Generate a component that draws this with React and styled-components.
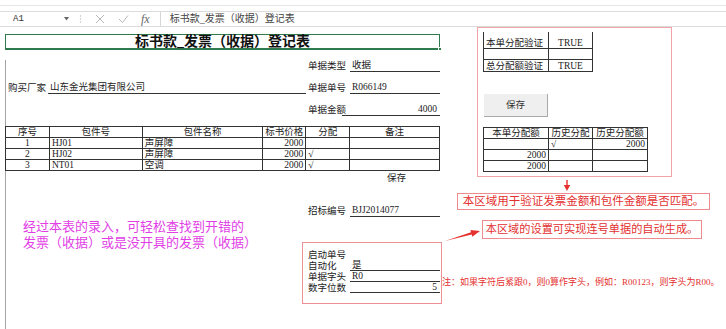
import React from "react";
import styled, { createGlobalStyle } from "styled-components";

const GlobalStyle = createGlobalStyle`
  html, body { margin: 0; padding: 0; background: #fff; }
  body {
    width: 726px;
    height: 329px;
    overflow: hidden;
    font-family: "Liberation Serif", "Noto Sans CJK SC", serif;
    color: #222;
  }
  * { box-sizing: border-box; }
`;

const Toolbar = styled.div`
  height: 6px;
  border-bottom: 1px solid #e6e6e6;
`;

const FormulaBar = styled.div`
  margin-top: 5px;
  height: 16px;
  border-top: 1px solid #dcdcdc;
  border-bottom: 1px solid #dcdcdc;
  display: flex;
  align-items: center;
`;

const NameBox = styled.div`
  margin-left: 7px;
  width: 66px;
  padding: 0 4px 0 6px;
  display: flex;
  align-items: center;
  justify-content: space-between;
  font: 9px "Liberation Mono", monospace;
  color: #333;
`;

const BarIcon = styled.svg`
  margin-left: ${p => p.$gap}px;
  flex: none;
`;

const Fx = styled.span`
  margin-left: 12px;
  font: italic 12px "Liberation Serif", serif;
  color: #666;
`;

const FormulaInput = styled.div`
  margin-left: 10px;
  flex: 1;
  align-self: stretch;
  border-left: 1px solid #d6d6d6;
  padding-left: 9px;
  font-size: 10px;
  line-height: 14px;
  color: #444;
`;

const Sheet = styled.div`
  display: flex;
  align-items: flex-start;
`;

const LeftCol = styled.div`
  width: 442px;
  padding-left: 5px;
  flex: none;
`;

const TitleCell = styled.div`
  position: relative;
  margin-top: 7px;
  width: 435px;
  height: 16px;
  border: 1px solid #2f7a4c;
  border-bottom-width: 2px;
  text-align: center;
  font: bold 14px "Liberation Serif", "Noto Sans CJK SC", serif;
  line-height: 13px;
  color: #111;
`;

const FillHandle = styled.span`
  position: absolute;
  right: -3px;
  bottom: -3px;
  width: 4px;
  height: 4px;
  background: #2f7a4c;
  border: 1px solid #fff;
`;

const FormBody = styled.div`
  width: 435px;
  height: 274px;
  border-left: 1px solid #a4a4a4;
`;

const FieldRow = styled.div`
  display: grid;
  grid-template-columns: 42px 258px 44px 90px;
  align-items: end;
  margin-top: ${p => p.$top}px;
`;

const Label = styled.div`
  grid-column: ${p => p.$col || "auto"};
  padding-left: 2px;
  font-size: 9.5px;
  line-height: 11px;
  height: 11px;
  white-space: nowrap;
`;

const Value = styled.div`
  grid-column: ${p => p.$col || "auto"};
  height: 12px;
  border-bottom: 1px solid #333;
  padding: 0 3px 0 2px;
  margin-left: ${p => p.$shift || 0}px;
  font-size: 9.5px;
  line-height: 11px;
  text-align: ${p => p.$align || "left"};
  white-space: nowrap;
`;

const SheetTable = styled.table`
  margin-top: ${p => p.$top || 0}px;
  margin-left: ${p => p.$left || 0}px;
  border-collapse: collapse;
  table-layout: fixed;
  font-size: 9.5px;
`;

const Cell = styled.td`
  height: ${p => p.$h || 11}px;
  padding: 0 2px;
  line-height: 10px;
  vertical-align: bottom;
  border: 1px solid #333;
  border-top-color: ${p => (p.$noTop ? "transparent" : "#333")};
  text-align: ${p => p.$align || "left"};
  white-space: nowrap;
  overflow: hidden;
`;

const PlainText = styled.div`
  margin-top: ${p => p.$top}px;
  margin-left: ${p => p.$left}px;
  font-size: 9.5px;
  line-height: 12px;
`;

const Lower = styled.div`
  display: flex;
  align-items: flex-start;
`;

const PinkNote = styled.div`
  flex: 0 0 296px;
  padding-left: 17px;
  margin-top: 2px;
  font-size: 13px;
  line-height: 16px;
  color: #e13ee6;
  white-space: nowrap;
`;

const AutoBox = styled.div`
  flex: none;
  width: 140px;
  height: 62px;
  margin-top: 25px;
  border: 1px solid #ee8f93;
  padding: 7px 1px 0 5px;
`;

const AutoRow = styled.div`
  display: grid;
  grid-template-columns: 42px 90px;
  align-items: end;
`;

const AutoLabel = styled.div`
  font-size: 9.5px;
  line-height: 10.5px;
  white-space: nowrap;
`;

const AutoValue = styled.div`
  height: 11px;
  border-bottom: 1px solid #333;
  padding: 0 3px 0 2px;
  font-size: 9.5px;
  line-height: 10px;
  text-align: ${p => p.$align || "left"};
`;

const RightCol = styled.div`
  flex: 1;
  display: flex;
  flex-direction: column;
  align-items: flex-start;
`;

const CheckRegion = styled.div`
  margin-left: 35px;
  width: 195px;
  height: 150px;
  border: 1px solid #f1a3a8;
  padding: 4px 0 0 5px;
`;

const SaveButton = styled.div`
  margin: 22px 0 0 1px;
  width: 64px;
  height: 23px;
  background: #efefef;
  border-right: 1px solid #a9a9a9;
  border-bottom: 1px solid #a9a9a9;
  font-size: 9.5px;
  line-height: 22px;
  text-align: center;
  color: #333;
`;

const DownArrow = styled.svg`
  margin: 3px 0 0 121px;
`;

const Callout = styled.div`
  margin-left: ${p => p.$left || 0}px;
  margin-top: ${p => p.$top || 0}px;
  width: ${p => p.$w}px;
  height: ${p => p.$h}px;
  border: 1px solid #ef8a8e;
  font-size: ${p => p.$size}px;
  line-height: ${p => p.$h - 2}px;
  text-align: center;
  color: #e3302f;
  white-space: nowrap;
`;

const CalloutRow = styled.div`
  margin-top: 10px;
  display: flex;
  align-items: flex-start;
`;

const RedNote = styled.div`
  margin-top: 31px;
  font-size: 9px;
  line-height: 11px;
  color: #e3302f;
  white-space: nowrap;
`;

const items = [
  { no: 1, code: "HJ01", name: "声屏障", price: 2000, alloc: "" },
  { no: 2, code: "HJ02", name: "声屏障", price: 2000, alloc: "√" },
  { no: 3, code: "NT01", name: "空调", price: 2000, alloc: "√" },
];

const history = [
  ["", "√", "2000"],
  ["2000", "", ""],
  ["2000", "", ""],
];

export default function App() {
  return (
    <>
      <GlobalStyle />
      <Toolbar />
      <FormulaBar>
        <NameBox>
          <span>A1</span>
          <svg width="5" height="4" viewBox="0 0 5 4">
            <path d="M0 0 L5 0 L2.5 3.5 Z" fill="#666" />
          </svg>
        </NameBox>
        <BarIcon $gap={6} width="3" height="10" viewBox="0 0 3 10">
          <circle cx="1.5" cy="2" r="0.7" fill="#bbb" />
          <circle cx="1.5" cy="5" r="0.7" fill="#bbb" />
          <circle cx="1.5" cy="8" r="0.7" fill="#bbb" />
        </BarIcon>
        <BarIcon $gap={13} width="10" height="10" viewBox="0 0 10 10">
          <path d="M1 1 L9 9 M9 1 L1 9" stroke="#b8b8b8" strokeWidth="1" />
        </BarIcon>
        <BarIcon $gap={13} width="11" height="10" viewBox="0 0 11 10">
          <path d="M1 5 L4.5 8.5 L10 1.5" stroke="#b8b8b8" strokeWidth="1" fill="none" />
        </BarIcon>
        <Fx>fx</Fx>
        <FormulaInput>标书款_发票（收据）登记表</FormulaInput>
      </FormulaBar>

      <Sheet>
        <LeftCol>
          <TitleCell>
            标书款_发票（收据）登记表
            <FillHandle />
          </TitleCell>
          <FormBody>
            <FieldRow $top={10}>
              <Label $col={3}>单据类型</Label>
              <Value $col={4}>收据</Value>
            </FieldRow>
            <FieldRow $top={10}>
              <Label>购买厂家</Label>
              <Value>山东金光集团有限公司</Value>
              <Label>单据单号</Label>
              <Value>R066149</Value>
            </FieldRow>
            <FieldRow $top={10}>
              <Label $col={3}>单据金额</Label>
              <Value $col={4} $align="right" $shift={-8}>4000</Value>
            </FieldRow>

            <SheetTable $top={10} $left={-1}>
              <colgroup>
                <col style={{ width: 44 }} />
                <col style={{ width: 93 }} />
                <col style={{ width: 121 }} />
                <col style={{ width: 43 }} />
                <col style={{ width: 44 }} />
                <col style={{ width: 90 }} />
              </colgroup>
              <tbody>
                <tr>
                  <Cell $align="center">序号</Cell>
                  <Cell $align="center">包件号</Cell>
                  <Cell $align="center">包件名称</Cell>
                  <Cell $align="center">标书价格</Cell>
                  <Cell $align="center">分配</Cell>
                  <Cell $align="center">备注</Cell>
                </tr>
                {items.map(it => (
                  <tr key={it.no}>
                    <Cell $align="center">{it.no}</Cell>
                    <Cell>{it.code}</Cell>
                    <Cell>{it.name}</Cell>
                    <Cell $align="right">{it.price}</Cell>
                    <Cell>{it.alloc}</Cell>
                    <Cell />
                  </tr>
                ))}
              </tbody>
            </SheetTable>

            <PlainText $top={1} $left={381}>保存</PlainText>

            <FieldRow $top={21}>
              <Label $col={3}>招标编号</Label>
              <Value $col={4}>BJJ2014077</Value>
            </FieldRow>

            <Lower>
              <PinkNote>
                经过本表的录入，可轻松查找到开错的
                <br />
                发票（收据）或是没开具的发票（收据）
              </PinkNote>
              <AutoBox>
                <AutoRow>
                  <AutoLabel>
                    启动单号
                    <br />
                    自动化
                  </AutoLabel>
                  <AutoValue>是</AutoValue>
                </AutoRow>
                <AutoRow>
                  <AutoLabel>单据字头</AutoLabel>
                  <AutoValue>R0</AutoValue>
                </AutoRow>
                <AutoRow>
                  <AutoLabel>数字位数</AutoLabel>
                  <AutoValue $align="right">5</AutoValue>
                </AutoRow>
              </AutoBox>
            </Lower>
          </FormBody>
        </LeftCol>

        <RightCol>
          <CheckRegion>
            <SheetTable>
              <colgroup>
                <col style={{ width: 65 }} />
                <col style={{ width: 44 }} />
              </colgroup>
              <tbody>
                <tr>
                  <Cell $h={16} $noTop>本单分配验证</Cell>
                  <Cell $h={16} $noTop $align="center">TRUE</Cell>
                </tr>
                <tr>
                  <Cell $h={11} />
                  <Cell $h={11} />
                </tr>
                <tr>
                  <Cell $h={12}>总分配额验证</Cell>
                  <Cell $h={12} $align="center">TRUE</Cell>
                </tr>
              </tbody>
            </SheetTable>

            <SaveButton>保存</SaveButton>

            <SheetTable $top={10}>
              <colgroup>
                <col style={{ width: 65 }} />
                <col style={{ width: 44 }} />
                <col style={{ width: 55 }} />
              </colgroup>
              <tbody>
                <tr>
                  <Cell $align="center">本单分配额</Cell>
                  <Cell $align="center">历史分配</Cell>
                  <Cell $align="center">历史分配额</Cell>
                </tr>
                {history.map((r, i) => (
                  <tr key={i}>
                    <Cell $align="right">{r[0]}</Cell>
                    <Cell>{r[1]}</Cell>
                    <Cell $align="right">{r[2]}</Cell>
                  </tr>
                ))}
              </tbody>
            </SheetTable>
          </CheckRegion>

          <DownArrow width="8" height="11" viewBox="0 0 8 11">
            <rect x="3.3" y="0" width="1.4" height="6" fill="#e5312f" />
            <path d="M0.8 5 L7.2 5 L4 11 Z" fill="#e5312f" />
          </DownArrow>

          <Callout $left={15} $top={2} $w={253} $h={17} $size={11.5}>
            本区域用于验证发票金额和包件金额是否匹配。
          </Callout>

          <CalloutRow>
            <svg width="40" height="26" viewBox="0 0 40 26">
              <path
                d="M3 21 L29.7 14.6 L30.3 16.8 L38 11 L28.4 10.1 L29 12.3 Z"
                fill="#e5312f"
              />
            </svg>
            <Callout $w={220} $h={19} $size={11.2}>
              本区域的设置可实现连号单据的自动生成。
            </Callout>
          </CalloutRow>

          <RedNote>注：如果字符后紧跟0，则0算作字头，例如：R00123，则字头为R00。</RedNote>
        </RightCol>
      </Sheet>
    </>
  );
}
